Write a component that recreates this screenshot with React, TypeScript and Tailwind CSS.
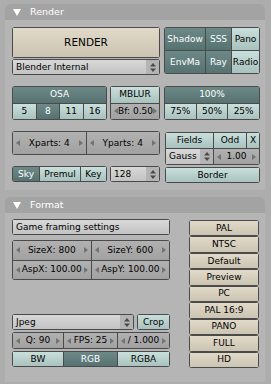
const GRP = 'gap-px bg-[#4a4a4a] p-px rounded-[3px] overflow-hidden'
const CELL = 'flex items-center justify-center whitespace-nowrap overflow-hidden'
const TAN = 'bg-linear-to-b from-[#e1dac9] to-[#ccc4b2] text-black'
const ON = 'bg-linear-to-b from-[#6c8988] to-[#567271] text-white'
const OFF = 'bg-linear-to-b from-[#c9dfdb] to-[#a9c2be] text-black'
const NUM = 'bg-linear-to-b from-[#b1b1b1] to-[#a1a1a1] text-black'
const MENU = 'bg-linear-to-b from-[#d8d8d8] to-[#c3c3c3] text-black'

function Tri({ right }: { right?: boolean }) {
  return (
    <svg width="4" height="6" viewBox="0 0 4 6" className="shrink-0">
      <polygon points={right ? '0,0 4,3 0,6' : '4,0 0,3 4,6'} fill="#727272" />
    </svg>
  )
}

function UpDown() {
  return (
    <svg width="6" height="9" viewBox="0 0 6 9">
      <polygon points="0,3.5 3,0 6,3.5" fill="#4a4a4a" />
      <polygon points="0,5.5 3,9 6,5.5" fill="#4a4a4a" />
    </svg>
  )
}

function Num({ label }: { label: string }) {
  return (
    <div className={`${NUM} flex items-center px-[3px] whitespace-nowrap overflow-hidden`}>
      <Tri />
      <span className="flex-1 text-center">{label}</span>
      <Tri right />
    </div>
  )
}

function Menu({ label, className }: { label: string; className: string }) {
  return (
    <div className={`${GRP} grid ${className}`}>
      <div className={`${MENU} flex items-center`}>
        <span className="flex-1 pl-[3px] whitespace-nowrap overflow-hidden">{label}</span>
        <div className="w-[13px] self-stretch flex items-center justify-center bg-[#b4b4b4]">
          <UpDown />
        </div>
      </div>
    </div>
  )
}

function Header({ title }: { title: string }) {
  return (
    <div className="h-[16px] bg-[#a3a3a3] rounded-t-[6px] flex items-center text-white text-[9.5px]">
      <svg width="8" height="7" viewBox="0 0 8 7" className="ml-[8px]">
        <polygon points="0,0 8,0 4,7" fill="#ffffff" />
      </svg>
      <span className="ml-[9px]">{title}</span>
    </div>
  )
}

export default function App() {
  return (
    <div className="w-[271px] h-[384px] bg-[#adadad] pt-[4px] pl-[5px] font-['DejaVu_Sans',sans-serif] text-[9px] leading-none">
      {/* Render panel */}
      <div className="w-[260px]">
        <Header title="Render" />
        <div className="bg-[#b5b5b5] pl-[7px] pt-[7px] pb-[7px]">
          <div className="flex gap-[4px]">
            <div className="w-[148px] flex flex-col gap-px">
              <div className={`${GRP} grid h-[31px]`}>
                <div className={`${TAN} ${CELL} text-[10.5px]`}>RENDER</div>
              </div>
              <Menu label="Blender Internal" className="h-[16px]" />
            </div>
            <div className={`${GRP} w-[96px] h-[47px] grid grid-cols-[40px_25px_1fr] grid-rows-2`}>
              <div className={`${ON} ${CELL}`}>Shadow</div>
              <div className={`${ON} ${CELL}`}>SSS</div>
              <div className={`${OFF} ${CELL}`}>Pano</div>
              <div className={`${ON} ${CELL}`}>EnvMa</div>
              <div className={`${ON} ${CELL}`}>Ray</div>
              <div className={`${OFF} ${CELL}`}>Radio</div>
            </div>
          </div>

          <div className="flex mt-[11px]">
            <div className={`${GRP} w-[95px] h-[34px] grid grid-cols-4 grid-rows-2`}>
              <div className={`${ON} ${CELL} col-span-4`}>OSA</div>
              <div className={`${OFF} ${CELL}`}>5</div>
              <div className={`${ON} ${CELL}`}>8</div>
              <div className={`${OFF} ${CELL}`}>11</div>
              <div className={`${OFF} ${CELL}`}>16</div>
            </div>
            <div className={`${GRP} w-[50px] h-[34px] ml-[3px] grid grid-rows-2`}>
              <div className={`${OFF} ${CELL}`}>MBLUR</div>
              <Num label="Bf: 0.50" />
            </div>
            <div className={`${GRP} w-[96px] h-[34px] ml-[4px] grid grid-cols-3 grid-rows-2`}>
              <div className={`${ON} ${CELL} col-span-3`}>100%</div>
              <div className={`${OFF} ${CELL}`}>75%</div>
              <div className={`${OFF} ${CELL}`}>50%</div>
              <div className={`${OFF} ${CELL}`}>25%</div>
            </div>
          </div>

          <div className="flex mt-[11px]">
            <div className="w-[148px] flex flex-col">
              <div className={`${GRP} h-[24px] grid grid-cols-2`}>
                <Num label="Xparts: 4" />
                <Num label="Yparts: 4" />
              </div>
              <div className="flex mt-[11px]">
                <div className={`${GRP} w-[95px] h-[16px] grid grid-cols-[26px_40px_1fr]`}>
                  <div className={`${ON} ${CELL}`}>Sky</div>
                  <div className={`${OFF} ${CELL}`}>Premul</div>
                  <div className={`${OFF} ${CELL}`}>Key</div>
                </div>
                <Menu label="128" className="w-[50px] h-[16px] ml-[3px]" />
              </div>
            </div>
            <div className="w-[95px] ml-[5px] pt-px flex flex-col gap-[2px]">
              <div className={`${GRP} h-[33px] grid grid-cols-[47px_32px_1fr] grid-rows-2`}>
                <div className={`${OFF} ${CELL}`}>Fields</div>
                <div className={`${OFF} ${CELL}`}>Odd</div>
                <div className={`${OFF} ${CELL}`}>X</div>
                <div className={`${MENU} flex items-center`}>
                  <span className="flex-1 pl-[3px]">Gauss</span>
                  <div className="w-[13px] self-stretch flex items-center justify-center bg-[#b4b4b4]">
                    <UpDown />
                  </div>
                </div>
                <div className="col-span-2 grid">
                  <Num label="1.00" />
                </div>
              </div>
              <div className={`${GRP} h-[16px] grid`}>
                <div className={`${OFF} ${CELL}`}>Border</div>
              </div>
            </div>
          </div>
        </div>
      </div>

      {/* Format panel */}
      <div className="w-[260px] mt-[7px]">
        <Header title="Format" />
        <div className="bg-[#b5b5b5] pl-[7px] pt-[6px] pb-[14px] flex">
          <div className="w-[158px] flex flex-col">
            <div className={`${GRP} h-[16px] grid`}>
              <div className={`${MENU} flex items-center pl-[3px]`}>Game framing settings</div>
            </div>
            <div className={`${GRP} h-[40px] mt-[5px] grid grid-cols-2 grid-rows-2`}>
              <Num label="SizeX: 800" />
              <Num label="SizeY: 600" />
              <Num label="AspX: 100.00" />
              <Num label="AspY: 100.00" />
            </div>
            <div className="flex mt-[34px]">
              <Menu label="Jpeg" className="w-[122px] h-[16px]" />
              <div className={`${GRP} w-[33px] h-[16px] ml-[3px] grid`}>
                <div className={`${OFF} ${CELL}`}>Crop</div>
              </div>
            </div>
            <div className={`${GRP} h-[17px] mt-[2px] grid grid-cols-[50px_53px_1fr]`}>
              <Num label="Q: 90" />
              <Num label="FPS: 25" />
              <Num label="/ 1.000" />
            </div>
            <div className={`${GRP} h-[16px] mt-[2px] grid grid-cols-[50px_53px_1fr]`}>
              <div className={`${OFF} ${CELL}`}>BW</div>
              <div className={`${ON} ${CELL}`}>RGB</div>
              <div className={`${OFF} ${CELL}`}>RGBA</div>
            </div>
          </div>
          <div className="w-[70px] h-[148px] ml-[19px] mt-px grid grid-rows-9 gap-0">
            {['PAL', 'NTSC', 'Default', 'Preview', 'PC', 'PAL 16:9', 'PANO', 'FULL', 'HD'].map((t) => (
              <div key={t} className={`${GRP} grid`}>
                <div className={`${TAN} ${CELL}`}>{t}</div>
              </div>
            ))}
          </div>
        </div>
      </div>
    </div>
  )
}
